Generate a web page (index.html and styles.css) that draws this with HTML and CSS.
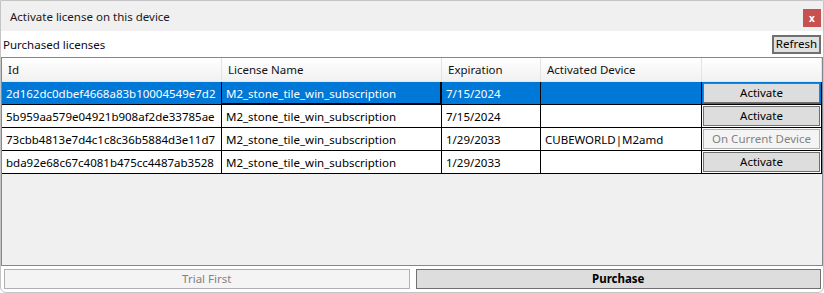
FILE: index.html
```html
<!doctype html>
<html lang="en">
  <head>
    <meta charset="UTF-8" />
    <title>Activate license on this device</title>
    <link rel="stylesheet" href="styles.css">
  </head>
  <body>
    <div class="window">
      <header class="titlebar">
        <span class="title">Activate license on this device</span>
        <button class="close-button">x</button>
      </header>

      <main class="content">
        <div class="toolbar">
          <span class="toolbar-label">Purchased licenses</span>
          <button class="btn refresh-button">Refresh</button>
        </div>

        <div class="grid">
          <table class="license-table">
            <colgroup>
              <col class="col-id" />
              <col class="col-name" />
              <col class="col-exp" />
              <col class="col-device" />
              <col class="col-action" />
            </colgroup>
            <thead>
              <tr>
                <th>Id</th>
                <th>License Name</th>
                <th>Expiration</th>
                <th>Activated Device</th>
                <th></th>
              </tr>
            </thead>
            <tbody>
              <tr class="selected">
                <td>2d162dc0dbef4668a83b10004549e7d2</td>
                <td class="current">M2_stone_tile_win_subscription</td>
                <td>7/15/2024</td>
                <td></td>
                <td class="action-cell"><button class="btn cell-button">Activate</button></td>
              </tr>
              <tr>
                <td>5b959aa579e04921b908af2de33785ae</td>
                <td>M2_stone_tile_win_subscription</td>
                <td>7/15/2024</td>
                <td></td>
                <td class="action-cell"><button class="btn cell-button">Activate</button></td>
              </tr>
              <tr>
                <td>73cbb4813e7d4c1c8c36b5884d3e11d7</td>
                <td>M2_stone_tile_win_subscription</td>
                <td>1/29/2033</td>
                <td>CUBEWORLD|M2amd</td>
                <td class="action-cell"><button class="btn cell-button" disabled>On Current Device</button></td>
              </tr>
              <tr>
                <td>bda92e68c67c4081b475cc4487ab3528</td>
                <td>M2_stone_tile_win_subscription</td>
                <td>1/29/2033</td>
                <td></td>
                <td class="action-cell"><button class="btn cell-button">Activate</button></td>
              </tr>
            </tbody>
          </table>
        </div>

        <div class="actions">
          <button class="btn action-button" disabled>Trial First</button>
          <button class="btn action-button purchase-button">Purchase</button>
        </div>
      </main>
    </div>
  </body>
</html>
```

FILE: styles.css
```css
* {
  margin: 0;
  padding: 0;
  box-sizing: border-box;
}

body {
  font-family: "Noto Sans", "Open Sans", sans-serif;
  font-size: 11.5px;
  color: #000;
  background: #fff;
}

.window {
  width: 824px;
  height: 293px;
  border: 1px solid #c4c4c4;
  border-radius: 0 0 6px 6px;
  background: #fff;
  display: flex;
  flex-direction: column;
  overflow: hidden;
}

.titlebar {
  height: 30px;
  background: #f0f0f0;
  display: flex;
  align-items: center;
  justify-content: space-between;
  padding: 0 2px 0 9px;
}

.title {
  font-size: 11.5px;
  color: #1a1a1a;
}

.close-button {
  width: 18px;
  height: 18px;
  border: none;
  background: #c75050;
  color: #fff;
  font-family: "Noto Sans", sans-serif;
  font-size: 10px;
  font-weight: bold;
  line-height: 16px;
  margin-top: 3px;
}

.content {
  flex: 1;
  display: flex;
  flex-direction: column;
}

.toolbar {
  height: 26px;
  display: flex;
  align-items: center;
  justify-content: space-between;
  padding: 0 2px 0 2px;
}

.toolbar-label {
  color: #0a0a1e;
}

.btn {
  font-family: "Noto Sans", "Open Sans", sans-serif;
  font-size: 11.5px;
  color: #000;
  background: #dddddd;
  border: 1px solid #707070;
}

.btn:disabled {
  background: #f4f4f4;
  border-color: #adb2b5;
  color: #838383;
}

.refresh-button {
  height: 19px;
  padding: 0 2px;
  border-width: 2px;
  background: #e1e1e1;
  line-height: 14px;
}

.grid {
  height: 209px;
  border: 1px solid #828790;
  background: #f0f0f0;
}

.license-table {
  width: 820px;
  table-layout: fixed;
  border-collapse: separate;
  border-spacing: 0;
}

.col-id { width: 220px; }
.col-name { width: 220px; }
.col-exp { width: 99px; }
.col-device { width: 161px; }
.col-action { width: 120px; }

.license-table th {
  height: 24px;
  font-weight: normal;
  text-align: left;
  padding: 0 6px;
  background: linear-gradient(#ffffff, #f1f1f1);
  border-right: 1px solid #e3e3e3;
  border-bottom: 1px solid #e8e8e8;
  color: #111;
}

.license-table td {
  height: 23px;
  padding: 0 4px;
  background: #fff;
  border-right: 1px solid #000;
  border-bottom: 1px solid #000;
  white-space: nowrap;
  overflow: hidden;
}

.license-table tr.selected td {
  background: #0078d7;
  color: #fff;
}

.license-table td.current {
  box-shadow: inset -1px -1px 0 #000;
}

.license-table td.action-cell {
  padding: 0 1px 1px 1px;
}

.cell-button {
  width: 100%;
  height: 20px;
  line-height: 16px;
}

.actions {
  flex: 1;
  display: flex;
  gap: 6px;
  padding: 3px 2px 0 3px;
}

.action-button {
  flex: 1 1 0;
  height: 20px;
  line-height: 16px;
}

.purchase-button {
  font-weight: bold;
}
```
